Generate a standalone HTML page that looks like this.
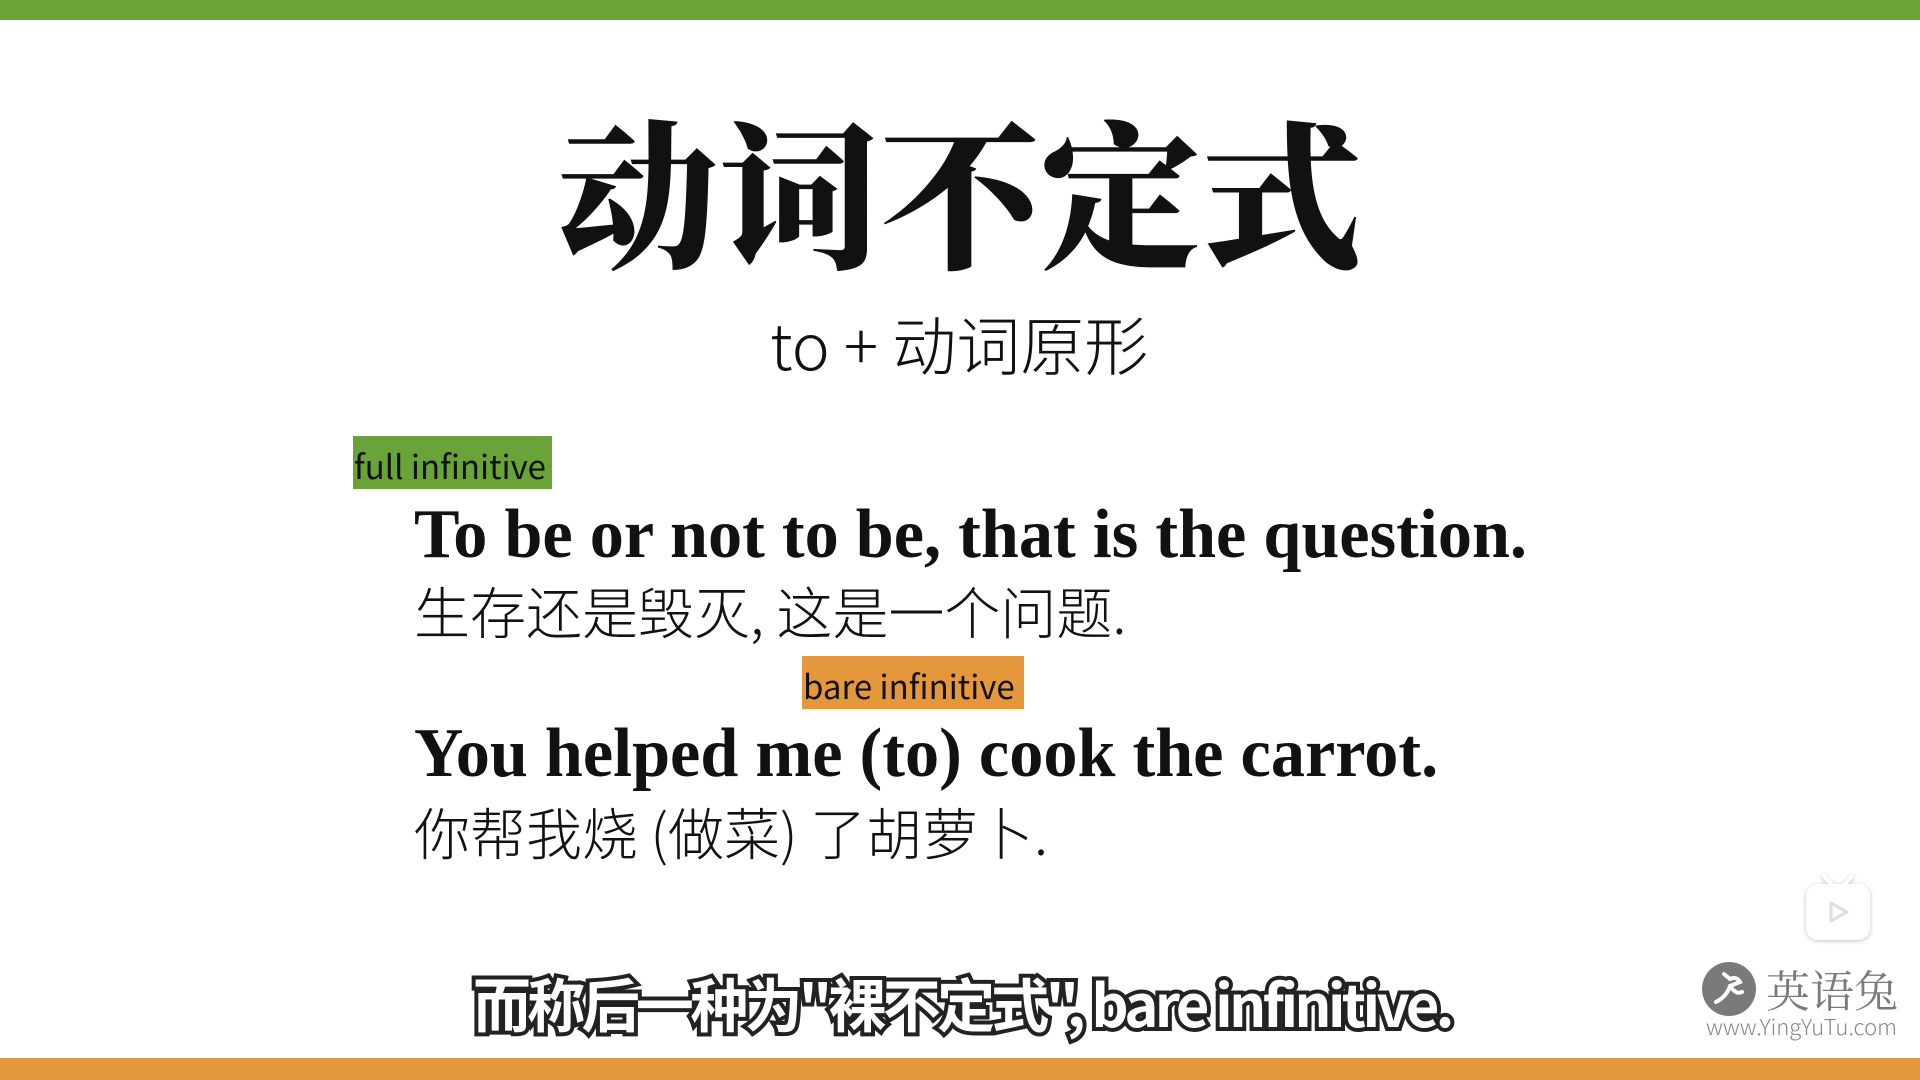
<!DOCTYPE html>
<html><head><meta charset="utf-8"><style>
body{margin:0;width:1920px;height:1080px;background:#fff;position:relative;overflow:hidden;font-family:"Liberation Sans","Noto Sans CJK SC",sans-serif}
.a{position:absolute;white-space:nowrap}
.title{left:558px;top:87px;font-family:"Noto Serif CJK SC",serif;font-weight:900;font-size:160px;line-height:200px;letter-spacing:1px;color:#111}
.sub{left:770px;top:303px;font-size:64px;line-height:80px;color:#111;font-family:"Noto Sans CJK SC",sans-serif;font-weight:300}
.lbl{height:53px;font-family:"Noto Sans CJK SC",sans-serif;font-size:33px;line-height:58px;color:#111;padding:0 1px;overflow:hidden}
.en{left:414px;font-family:"Liberation Serif",serif;font-weight:bold;font-size:70px;line-height:80px;color:#111;transform-origin:left top}
.zh{left:414px;font-family:"Noto Sans CJK SC",sans-serif;font-size:56px;line-height:70px;color:#111;font-weight:300}
.cap{left:473px;top:962px;font-family:"Noto Sans CJK SC",sans-serif;font-weight:bold;font-size:58px;line-height:80px;color:#fff;-webkit-text-stroke:8px #222;paint-order:stroke fill;letter-spacing:-3.7px}
</style></head><body>
<div class="a" style="left:0;top:0;width:1920px;height:20px;background:#6aa338"></div>
<div class="a" style="left:0;top:1058px;width:1920px;height:22px;background:#e5973b"></div>
<div class="a title">动词不定式</div>
<div class="a sub">to + 动词原形</div>
<div class="a lbl" style="left:353px;top:436px;width:197px;background:#6aa338">full infinitive</div>
<div class="a en" style="top:495px;transform:scaleX(0.975)">To be or not to be, that is the question.</div>
<div class="a zh" style="top:576px">生存还是毁灭, 这是一个问题.</div>
<div class="a lbl" style="left:802px;top:656px;width:220px;background:#e5973b">bare infinitive</div>
<div class="a en" style="top:714px;transform:scaleX(0.975)">You helped me (to) cook the carrot.</div>
<div class="a zh" style="top:797px">你帮我烧 (做菜) 了胡萝卜.</div>
<div class="a cap">而称后一种为"裸不定式", bare infinitive.</div>
<svg class="a" style="left:1800px;top:870px" width="76" height="76" viewBox="0 0 76 76">
<defs><filter id="s"><feDropShadow dx="0" dy="1" stdDeviation="2" flood-opacity="0.25"/></filter></defs>
<g filter="url(#s)" fill="#fff"><path d="M24 6 L32 15 M52 6 L44 15" stroke="#fff" stroke-width="4" stroke-linecap="round"/>
<rect x="6" y="14" width="64" height="56" rx="12"/></g>
<path d="M31 33 L47 42 L31 51 Z" fill="none" stroke="#ddd" stroke-width="3" stroke-linejoin="round"/>
</svg>
<svg class="a" style="left:1702px;top:962px" width="54" height="54" viewBox="0 0 54 54"><circle cx="27" cy="27" r="27" fill="#7a7a7a"/>
<path d="M14 40 C22 36 26 30 28 24 L38 20 C36 16 32 15 28 17 L22 12 M28 24 C32 30 36 32 40 30" stroke="#fff" stroke-width="4" fill="none" stroke-linecap="round"/></svg>
<div class="a" style="left:1766px;top:958px;font-family:'Noto Serif CJK SC',serif;font-size:44px;line-height:60px;color:#7a7a7a">英语兔</div>
<div class="a" style="left:1706px;top:1012px;font-size:22px;line-height:28px;color:#888;font-family:'Noto Sans CJK SC',sans-serif;font-weight:300">www.YingYuTu.com</div>
</body></html>
